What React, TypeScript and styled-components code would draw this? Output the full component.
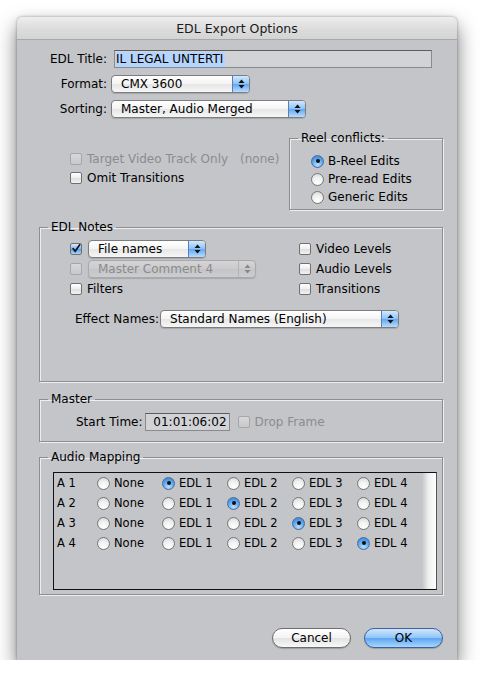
import React from 'react'
import styled, { createGlobalStyle } from 'styled-components'

const GlobalStyle = createGlobalStyle`
  body {
    margin: 0;
    background: #ffffff;
    font-family: "DejaVu Sans", "Liberation Sans", sans-serif;
    font-size: 12px;
    color: #000;
  }
`

const Arrows = ({ disabled }: { disabled?: boolean }) => (
  <svg width="7" height="10" viewBox="0 0 7 10">
    <path d="M3.5 0.5 L6.5 4 L0.5 4 Z" fill={disabled ? '#888' : '#111'} />
    <path d="M3.5 9.5 L6.5 6 L0.5 6 Z" fill={disabled ? '#888' : '#111'} />
  </svg>
)

const Check = () => (
  <svg width="12" height="12" viewBox="0 0 12 12">
    <path d="M2.5 5.5 L5 8.8 L10.5 1" stroke="#111" strokeWidth="2" fill="none" strokeLinecap="round" />
  </svg>
)

const CheckBox = ({ label, checked, disabled }: { label?: string; checked?: boolean; disabled?: boolean }) => (
  <CheckRow $disabled={disabled}>
    <Box $checked={checked} $disabled={disabled}>{checked && <Check />}</Box>
    {label && <span>{label}</span>}
  </CheckRow>
)

const Radio = ({ label, on }: { label: string; on?: boolean }) => (
  <RadioRow>
    <Circle $on={on}>{on && <Dot />}</Circle>
    <span>{label}</span>
  </RadioRow>
)

const Popup = ({ value, width, disabled }: { value: string; width: number; disabled?: boolean }) => (
  <Pop $w={width} $disabled={disabled}>
    <PopText>{value}</PopText>
    <Cap $disabled={disabled}><Arrows disabled={disabled} /></Cap>
  </Pop>
)

const tracks = [1, 2, 3, 4]
const targets = ['None', 'EDL 1', 'EDL 2', 'EDL 3', 'EDL 4']

const App = () => {
  return (
    <>
      <GlobalStyle />
      <Window>
        <TitleBar>EDL Export Options</TitleBar>
        <TopForm>
          <Label>EDL Title:</Label>
          <TitleField><Sel>IL LEGAL UNTERTI</Sel></TitleField>
          <Label>Format:</Label>
          <Popup value="CMX 3600" width={139} />
          <Label>Sorting:</Label>
          <Popup value="Master, Audio Merged" width={195} />
        </TopForm>

        <Middle>
          <LeftChecks>
            <CheckRow $disabled>
              <Box $disabled />
              <span>Target Video Track Only</span>
              <NoneText>(none)</NoneText>
            </CheckRow>
            <CheckBox label="Omit Transitions" />
          </LeftChecks>
          <ReelSet>
            <Legend>Reel conflicts:</Legend>
            <ReelList>
              <Radio label="B-Reel Edits" on />
              <Radio label="Pre-read Edits" />
              <Radio label="Generic Edits" />
            </ReelList>
          </ReelSet>
        </Middle>

        <NotesSet>
          <Legend>EDL Notes</Legend>
          <NotesGrid>
            <Pair>
              <CheckBox checked />
              <Popup value="File names" width={118} />
            </Pair>
            <CheckBox label="Video Levels" />
            <Pair>
              <CheckBox disabled />
              <Popup value="Master Comment 4" width={168} disabled />
            </Pair>
            <CheckBox label="Audio Levels" />
            <CheckBox label="Filters" />
            <CheckBox label="Transitions" />
          </NotesGrid>
          <EffectRow>
            <span>Effect Names:</span>
            <Popup value="Standard Names (English)" width={239} />
          </EffectRow>
        </NotesSet>

        <MasterSet>
          <Legend>Master</Legend>
          <MasterRow>
            <span>Start Time:</span>
            <TimeField>01:01:06:02</TimeField>
            <CheckBox label="Drop Frame" disabled />
          </MasterRow>
        </MasterSet>

        <AudioSet>
          <Legend>Audio Mapping</Legend>
          <ListBox>
            <ListRows>
              {tracks.map((t) => (
                <TrackRow key={t}>
                  <TrackName>A {t}</TrackName>
                  {targets.map((name, i) => (
                    <TrackCell key={name}>
                      <Radio label={name} on={i === t} />
                    </TrackCell>
                  ))}
                </TrackRow>
              ))}
            </ListRows>
            <ScrollStrip />
          </ListBox>
        </AudioSet>

        <Buttons>
          <CancelButton>Cancel</CancelButton>
          <OkButton>OK</OkButton>
        </Buttons>
      </Window>
    </>
  )
}

export default App

const Window = styled.div`
  width: 440px;
  height: 643px;
  margin: 17px 0 0 17px;
  background: #c4c5c9;
  border-radius: 5px 5px 0 0;
  box-shadow: 0 9px 20px rgba(0, 0, 0, 0.55), 0 0 3px rgba(0, 0, 0, 0.35);
  display: flex;
  flex-direction: column;
  overflow: hidden;
`
const TitleBar = styled.div`
  height: 23px;
  box-sizing: border-box;
  background: linear-gradient(#eeeeee, #dcdcdc 55%, #d4d4d4);
  border-bottom: 1px solid #a8a8a8;
  display: flex;
  align-items: center;
  justify-content: center;
  font-size: 12.5px;
  color: #1a1a1a;
`
const TopForm = styled.div`
  display: grid;
  grid-template-columns: 90px 1fr;
  grid-auto-rows: 18px;
  column-gap: 4px;
  row-gap: 7px;
  margin-top: 10px;
  align-items: center;
`
const Label = styled.div`
  text-align: right;
`
const TitleField = styled.div`
  width: 318px;
  height: 18px;
  box-sizing: border-box;
  margin-left: 3px;
  background: #d2d3d6;
  border: 1px solid #8a8a8a;
  border-top-color: #5c5c5c;
  display: flex;
  align-items: center;
  padding-left: 1px;
`
const Sel = styled.span`
  background: #b5d5ff;
  line-height: 15px;
  padding-right: 2px;
`
const Pop = styled.div<{ $w: number; $disabled?: boolean }>`
  width: ${(p) => p.$w}px;
  height: 18px;
  box-sizing: border-box;
  border: 1px solid ${(p) => (p.$disabled ? '#a9a9ab' : '#7d7d7d')};
  border-radius: 4px;
  background: ${(p) =>
    p.$disabled
      ? 'linear-gradient(#d4d4d6, #cbcbcd 50%, #c4c4c6 50%, #cdcdcf)'
      : 'linear-gradient(#ffffff, #f4f4f4 50%, #e6e6e6 50%, #f6f6f6)'};
  color: ${(p) => (p.$disabled ? '#8b8b8b' : '#000')};
  display: flex;
  align-items: center;
  overflow: hidden;
  box-shadow: 0 1px 1px rgba(0, 0, 0, 0.15);
`
const PopText = styled.div`
  flex: 1;
  padding-left: 9px;
  white-space: nowrap;
`
const Cap = styled.div<{ $disabled?: boolean }>`
  width: 16px;
  height: 100%;
  display: flex;
  align-items: center;
  justify-content: center;
  border-left: 1px solid ${(p) => (p.$disabled ? '#b3b3b5' : '#5a7fb8')};
  background: ${(p) =>
    p.$disabled
      ? 'transparent'
      : 'linear-gradient(#d2e8ff, #8cc2f7 50%, #5ea6f0 50%, #b9dcff)'};
`
const Middle = styled.div`
  display: flex;
  margin-top: 13px;
`
const LeftChecks = styled.div`
  width: 272px;
  padding: 18px 0 0 53px;
  box-sizing: border-box;
  display: flex;
  flex-direction: column;
`
const CheckRow = styled.div<{ $disabled?: boolean }>`
  display: flex;
  align-items: center;
  gap: 5px;
  height: 19px;
  color: ${(p) => (p.$disabled ? '#8c8c8c' : '#000')};
`
const Box = styled.div<{ $checked?: boolean; $disabled?: boolean }>`
  width: 12px;
  height: 12px;
  box-sizing: border-box;
  border: 1px solid ${(p) => (p.$disabled ? '#a6a6a8' : '#707070')};
  border-radius: 2px;
  background: ${(p) =>
    p.$checked
      ? 'linear-gradient(#d7ebff, #7ab8f5 50%, #4e9bec 50%, #a9d6ff)'
      : p.$disabled
      ? 'linear-gradient(#d8d8da, #c8c8ca)'
      : 'linear-gradient(#ffffff, #eeeeee 50%, #dedede 50%, #f2f2f2)'};
  display: flex;
  align-items: center;
  justify-content: center;
  flex-shrink: 0;
  svg {
    margin-top: -1px;
  }
`
const NoneText = styled.span`
  margin-left: 7px;
`
const Legend = styled.legend`
  margin-left: 8px;
  padding: 0 3px;
  line-height: 14px;
`
const Fieldset = styled.fieldset`
  margin: 0;
  padding: 0;
  min-width: 0;
  box-sizing: border-box;
  border: 1px solid #8e8e8e;
  box-shadow: 1px 1px 0 #eeeeee, inset 1px 1px 0 #eeeeee;
`
const ReelSet = styled(Fieldset)`
  width: 154px;
`
const ReelList = styled.div`
  padding: 7px 0 3px 21px;
  display: flex;
  flex-direction: column;
`
const RadioRow = styled.div`
  display: flex;
  align-items: center;
  gap: 4px;
  height: 18px;
  white-space: nowrap;
`
const Circle = styled.div<{ $on?: boolean }>`
  width: 13px;
  height: 13px;
  box-sizing: border-box;
  border-radius: 50%;
  border: 1px solid ${(p) => (p.$on ? '#4a6a9c' : '#777')};
  background: ${(p) =>
    p.$on
      ? 'radial-gradient(circle at 50% 80%, #b8e0ff, #5aa4ee 55%, #3c7fd0)'
      : 'radial-gradient(circle at 50% 80%, #ffffff, #f0f0f0 50%, #d2d2d2)'};
  display: flex;
  align-items: center;
  justify-content: center;
  flex-shrink: 0;
`
const Dot = styled.div`
  width: 4px;
  height: 4px;
  border-radius: 50%;
  background: #111;
`
const NotesSet = styled(Fieldset)`
  width: 404px;
  margin: 10px 0 0 22px;
  padding-bottom: 53px;
`
const NotesGrid = styled.div`
  display: grid;
  grid-template-columns: 229px 1fr;
  grid-auto-rows: 20px;
  align-items: center;
  padding: 5px 0 0 30px;
`
const Pair = styled.div`
  display: flex;
  align-items: center;
  gap: 6px;
`
const EffectRow = styled.div`
  display: flex;
  align-items: center;
  gap: 1px;
  margin: 11px 0 0 35px;
`
const MasterSet = styled(Fieldset)`
  width: 404px;
  margin: 10px 0 0 22px;
  padding-bottom: 10px;
`
const MasterRow = styled.div`
  display: flex;
  align-items: center;
  gap: 6px;
  padding: 6px 0 0 36px;
  & > span {
    margin-right: -4px;
  }
  & > div:last-child {
    margin-left: 2px;
  }
`
const TimeField = styled.div`
  width: 85px;
  height: 18px;
  box-sizing: border-box;
  border: 1px solid #8a8a8a;
  border-top-color: #5c5c5c;
  background: #d2d3d6;
  text-align: right;
  padding-right: 2px;
  line-height: 16px;
`
const AudioSet = styled(Fieldset)`
  width: 404px;
  margin: 8px 0 0 22px;
  padding-bottom: 4px;
`
const ListBox = styled.div`
  margin: 8px 5px 0 13px;
  height: 118px;
  box-sizing: border-box;
  border: 1px solid #111;
  border-right-color: #555;
  display: flex;
`
const ListRows = styled.div`
  flex: 1;
  display: flex;
  flex-direction: column;
  font-size: 11.5px;
`
const TrackRow = styled.div`
  display: flex;
  align-items: center;
  height: 20px;
`
const TrackName = styled.div`
  width: 43px;
  padding-left: 3px;
  box-sizing: border-box;
`
const TrackCell = styled.div`
  width: 65px;
`
const ScrollStrip = styled.div`
  width: 16px;
  background: linear-gradient(90deg, #c4c5c9, #eeeeee 45%, #ffffff);
`
const Buttons = styled.div`
  display: flex;
  justify-content: flex-end;
  gap: 13px;
  margin-top: 33px;
  padding-right: 14px;
`
const PillButton = styled.div`
  width: 79px;
  height: 20px;
  box-sizing: border-box;
  border-radius: 10px;
  display: flex;
  align-items: center;
  justify-content: center;
  font-size: 12px;
  box-shadow: 0 1px 1px rgba(0, 0, 0, 0.2);
`
const CancelButton = styled(PillButton)`
  border: 1px solid #6e6e6e;
  background: linear-gradient(#ffffff, #f3f3f3 50%, #e2e2e2 50%, #f8f8f8);
`
const OkButton = styled(PillButton)`
  border: 1px solid #3d5f9a;
  background: linear-gradient(#cfe6ff, #8fc4f8 50%, #5aa5f0 50%, #a8d6ff);
`
